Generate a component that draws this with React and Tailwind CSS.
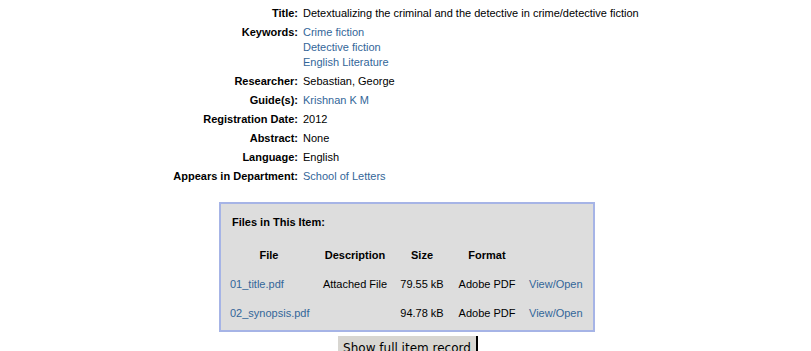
import React from 'react';

const link = 'text-[#336699]';

const rows = [
  { label: 'Title:', values: ['Detextualizing the criminal and the detective in crime/detective fiction'] },
  { label: 'Keywords:', values: ['Crime fiction', 'Detective fiction', 'English Literature'], link: true },
  { label: 'Researcher:', values: ['Sebastian, George'] },
  { label: 'Guide(s):', values: ['Krishnan K M'], link: true },
  { label: 'Registration Date:', values: ['2012'] },
  { label: 'Abstract:', values: ['None'] },
  { label: 'Language:', values: ['English'] },
  { label: 'Appears in Department:', values: ['School of Letters'], link: true },
];

const files = [
  { name: '01_title.pdf', desc: 'Attached File', size: '79.55 kB', format: 'Adobe PDF' },
  { name: '02_synopsis.pdf', desc: '', size: '94.78 kB', format: 'Adobe PDF' },
];

// column widths of the files table
const cols = ['w-[88px]', 'w-[84px]', 'w-[50px]', 'w-[80px]', 'w-[62px]'];

export default function App() {
  return (
    <div className="w-[811px] h-[351px] overflow-hidden bg-white text-[11px] text-black" style={{ fontFamily: '"Liberation Sans", Arial, sans-serif' }}>
      {/* Item metadata */}
      <div className="grid grid-cols-[298px_1fr] gap-x-[5px] pt-[4px]">
        {rows.map((r) => (
          <React.Fragment key={r.label}>
            <div className="text-right font-bold leading-[15px] py-[2px]">{r.label}</div>
            <div className="py-[2px] leading-[15px]">
              {r.values.map((v) => (
                <div key={v} className={r.link ? link : ''}>{v}</div>
              ))}
            </div>
          </React.Fragment>
        ))}
      </div>

      {/* Files box */}
      <div className="ml-[219px] mt-[16px] w-[376px] border-2 border-[#a6b4e6] bg-[#dddddd] pt-[11px] pb-[2px]">
        <div className="pl-[11px] font-bold leading-[15px]">Files in This Item:</div>
        <div className="ml-[4px] mt-[11px]">
          <div className="flex h-[29px] items-center font-bold">
            <div className={`${cols[0]} text-center`}>File</div>
            <div className={`${cols[1]} text-center`}>Description</div>
            <div className={`${cols[2]} text-center`}>Size</div>
            <div className={`${cols[3]} text-center`}>Format</div>
            <div className={cols[4]} />
          </div>
          {files.map((f) => (
            <div key={f.name} className="flex h-[29px] items-center">
              <div className={`${cols[0]} pl-[5px] whitespace-nowrap ${link}`}>{f.name}</div>
              <div className={`${cols[1]} text-center`}>{f.desc}</div>
              <div className={`${cols[2]} text-center`}>{f.size}</div>
              <div className={`${cols[3]} text-center`}>{f.format}</div>
              <div className={`${cols[4]} pl-[2px] ${link}`}>View/Open</div>
            </div>
          ))}
        </div>
      </div>

      <div className="flex justify-center pl-[5px] mt-[4px]">
        <button className="h-[24px] px-[5px] bg-[#d8d6d1] border-r-2 border-r-black text-[12px] leading-[24px] text-black" style={{ fontFamily: '"DejaVu Sans", sans-serif' }}>
          Show full item record
        </button>
      </div>
    </div>
  );
}
